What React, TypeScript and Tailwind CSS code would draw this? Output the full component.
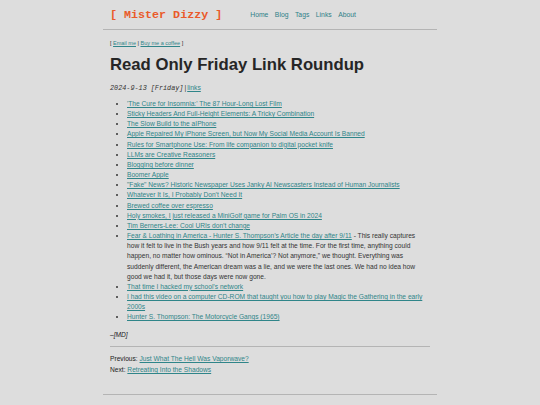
const links: { title: string; note?: string }[] = [
  { title: "'The Cure for Insomnia:' The 87 Hour-Long Lost Film" },
  { title: 'Sticky Headers And Full-Height Elements: A Tricky Combination' },
  { title: 'The Slow Build to the aIPhone' },
  { title: 'Apple Repaired My iPhone Screen, but Now My Social Media Account Is Banned' },
  { title: 'Rules for Smartphone Use: From life companion to digital pocket knife' },
  { title: 'LLMs are Creative Reasoners' },
  { title: 'Blogging before dinner' },
  { title: 'Boomer Apple' },
  { title: '"Fake" News? Historic Newspaper Uses Janky AI Newscasters Instead of Human Journalists' },
  { title: 'Whatever It Is, I Probably Don\u2019t Need It' },
  { title: 'Brewed coffee over espresso' },
  { title: 'Holy smokes, I just released a MiniGolf game for Palm OS in 2024' },
  { title: 'Tim Berners-Lee: Cool URIs don\u2019t change' },
  {
    title: 'Fear & Loathing in America - Hunter S. Thompson\u2019s Article the day after 9/11',
    note:
      ' - This really captures how it felt to live in the Bush years and how 9/11 felt at the time. For the first time, anything could happen, no matter how ominous. \u201cNot in America\u2019? Not anymore,\u201d we thought. Everything was suddenly different, the American dream was a lie, and we were the last ones. We had no idea how good we had it, but those days were now gone.',
  },
  { title: 'That time I hacked my school\u2019s network' },
  { title: 'I had this video on a computer CD-ROM that taught you how to play Magic the Gathering in the early 2000s' },
  { title: 'Hunter S. Thompson: The Motorcycle Gangs (1965)' },
]

const linkCls = 'text-[#2f8589] underline decoration-[0.5px] underline-offset-[1px]'

export default function App() {
  return (
    <div className="min-h-screen bg-[#dddddd] font-['Liberation_Sans',Arial,sans-serif] text-[#222222]">
      <div className="mx-auto w-[334px]">
        {/* header */}
        <header className="flex h-[30px] items-center border-b border-[#b4b4b4] px-[7px] pt-[2px]">
          <span className="font-['Liberation_Mono',monospace] text-[11.7px] font-bold whitespace-pre text-[#ea5a2a]">
            [ Mister Dizzy ]
          </span>
          <nav className="ml-[28px] flex gap-[6.5px] text-[6.8px] text-[#2e7f88]">
            <a>Home</a>
            <a>Blog</a>
            <a>Tags</a>
            <a>Links</a>
            <a>About</a>
          </nav>
        </header>

        <main className="px-[7px]">
          <p className="mt-[9px] text-[5.5px] leading-[8px]">
            [ <a className={linkCls}>Email me</a> | <a className={linkCls}>Buy me a coffee</a> ]
          </p>

          <h1 className="mt-[5px] text-[16.7px] leading-[26px] font-bold text-[#262626]">
            Read Only Friday Link Roundup
          </h1>

          <p className="mt-[5px] text-[6.8px] leading-[10px] text-[#333]">
            <span className="font-['Liberation_Mono',monospace] italic">2024-9-13 [Friday]</span>
            <span className="mx-[1px]">|</span>
            <a className={linkCls}>links</a>
          </p>

          <ul className="mt-[6px] list-disc pr-[3px] pl-[17px] text-[6.65px] leading-[10.15px] text-[#333] marker:text-[#333]">
            {links.map((l) => (
              <li key={l.title}>
                <a className={linkCls}>{l.title}</a>
                {l.note}
              </li>
            ))}
          </ul>

          <p className="mt-[8px] text-[6.65px] leading-[10px] italic">–[MD]</p>

          <hr className="mt-[6px] border-t border-[#b4b4b4]" />

          <div className="mt-[6px] text-[6.65px] leading-[11px]">
            <p>
              Previous: <a className={linkCls}>Just What The Hell Was Vaporwave?</a>
            </p>
            <p>
              Next: <a className={linkCls}>Retreating Into the Shadows</a>
            </p>
          </div>
        </main>

        <footer className="mt-[19px] h-[20px] border-t border-[#b4b4b4]" />
      </div>
    </div>
  )
}
